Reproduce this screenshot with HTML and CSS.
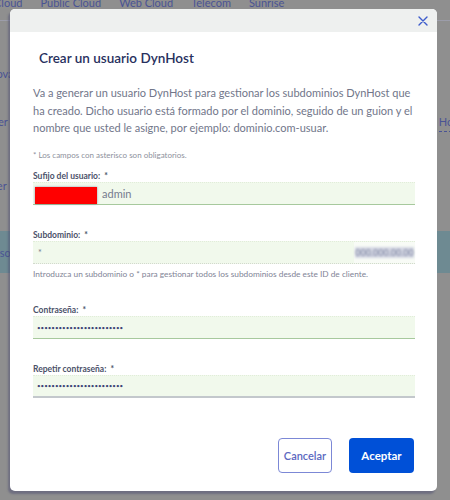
FILE: index.html
```html
<!DOCTYPE html>
<html lang="es">
<head>
    <meta charset="UTF-8">
    <meta name="viewport" content="width=device-width, initial-scale=1.0">
    <title>DynHost</title>
    <link rel="stylesheet" href="styles.css">
</head>
<body>
    <!-- dimmed manager page behind the dialog -->
    <div class="page">
        <nav class="topnav">
            <span class="nav-item first">Cloud</span>
            <span class="nav-item">Public Cloud</span>
            <span class="nav-item">Web Cloud</span>
            <span class="nav-item">Telecom</span>
            <span class="nav-item">Sunrise</span>
        </nav>
        <div class="page-row row-a"><span class="side-l">Renova</span></div>
        <div class="page-row row-b">
            <span class="side-l">Gener</span>
            <span class="side-r">Host</span>
        </div>
        <div class="page-row row-c"><span class="side-l">Hacer</span></div>
        <div class="page-band"><span class="side-l">Uso</span></div>
    </div>

    <div class="modal" role="dialog">
        <div class="modal-head">
            <button class="close" aria-label="Cerrar">
                <svg width="10" height="10" viewBox="0 0 10 10">
                    <path d="M1 1 L9 9 M9 1 L1 9" stroke="#3d5ccc" stroke-width="1.4" stroke-linecap="round" fill="none"/>
                </svg>
            </button>
        </div>

        <div class="modal-body">
            <h2 class="modal-title">Crear un usuario DynHost</h2>
            <p class="intro">Va a generar un usuario DynHost para gestionar los subdominios DynHost que ha creado. Dicho usuario está formado por el dominio, seguido de un guion y el nombre que usted le asigne, por ejemplo: dominio.com-usuar.</p>
            <p class="note">* Los campos con asterisco son obligatorios.</p>

            <div class="field first">
                <label class="field-label">Sufijo del usuario:&nbsp; *</label>
                <div class="input valid">
                    <span class="redact"></span>
                    <span class="value">admin</span>
                </div>
            </div>

            <div class="field">
                <label class="field-label">Subdominio:&nbsp; *</label>
                <div class="input plain">
                    <span class="value star">*</span>
                    <span class="addr"><span class="addr-text">000.000.00.00</span></span>
                </div>
                <p class="help">Introduzca un subdominio o * para gestionar todos los subdominios desde este ID de cliente.</p>
            </div>

            <div class="field">
                <label class="field-label">Contraseña:&nbsp; *</label>
                <div class="input valid">
                    <span class="dots">••••••••••••••••••••••••</span>
                </div>
            </div>

            <div class="field">
                <label class="field-label">Repetir contraseña:&nbsp; *</label>
                <div class="input focused">
                    <span class="dots">••••••••••••••••••••••••</span>
                </div>
            </div>
        </div>

        <div class="modal-foot">
            <button class="btn btn-ghost">Cancelar</button>
            <button class="btn btn-primary">Aceptar</button>
        </div>
    </div>
</body>
</html>
```

FILE: styles.css
```css
* {
    margin: 0;
    padding: 0;
    box-sizing: border-box;
}

body {
    font-family: Lato, "Open Sans", sans-serif;
    background: #8f8f8f;
    height: 100vh;
    overflow: hidden;
}

/* background page */
.page {
    color: #4a5394;
    font-size: 11px;
}

.topnav {
    display: flex;
    gap: 18px;
    height: 25px;
    margin-top: -4px;
    line-height: 14px;
    border-bottom: 1px solid #9c9daa;
}

.nav-item.first {
    margin-left: -6px;
}

.page-row {
    display: flex;
    justify-content: space-between;
    line-height: 12px;
}

.row-a { margin-top: 47px; }
.row-b { margin-top: 36px; }
.row-c { margin-top: 48px; }

.side-l {
    margin-left: -22px;
}

.side-r {
    margin-right: -12px;
    padding-bottom: 3px;
    border-bottom: 1px dashed #4a5394;
}

.page-band {
    margin-top: 39px;
    height: 42px;
    background: #6e8a92;
    display: flex;
    align-items: center;
}

.page-band .side-l {
    margin-left: -8px;
}

/* dialog */
.modal {
    position: absolute;
    top: 9px;
    left: 10px;
    width: 427px;
    background: #fff;
    border-radius: 5px;
    box-shadow: -2px 3px 2px rgba(70, 72, 110, 0.45);
}

.modal-head {
    height: 23px;
    background: #eef0ef;
    border-radius: 5px 5px 0 0;
    display: flex;
    justify-content: flex-end;
    align-items: center;
    padding-right: 9px;
}

.close {
    border: 0;
    background: none;
    display: flex;
    cursor: pointer;
}

.modal-body {
    padding: 0 22px 0 23px;
}

.modal-title {
    margin: 17px 0 0 6px;
    font-size: 13.5px;
    line-height: 18px;
    font-weight: 600;
    color: #27305e;
}

.intro {
    margin-top: 17px;
    font-size: 11px;
    line-height: 17.5px;
    color: #71768a;
}

.note {
    margin-top: 12px;
    font-size: 8px;
    line-height: 12px;
    color: #8d919c;
}

.field {
    margin-top: 24px;
}

.field.first {
    margin-top: 9px;
}

.field-label {
    display: block;
    font-size: 8.5px;
    line-height: 12px;
    font-weight: 700;
    color: #4b5169;
}

.input {
    height: 23px;
    display: flex;
    align-items: center;
    padding-left: 2px;
    background: #f1f9ec;
    border-top: 1px dotted #e1edd9;
    border-bottom: 1px solid #a7c99d;
}

.input.plain {
    border-bottom: 1px dotted #d2d9cd;
}

.input.focused {
    border-bottom: 2px solid #c3c8cc;
}

.redact {
    width: 62px;
    height: 17px;
    margin-top: 4px;
    background: #ff0000;
    box-shadow: 0 0 2px rgba(80, 80, 120, 0.6);
}

.value {
    margin-left: 5px;
    font-size: 11px;
    color: #767b8e;
}

.value.star {
    margin-left: 3px;
    font-size: 9px;
}

/* blurred client address chip */
.addr {
    margin-left: auto;
    width: 61px;
    height: 100%;
    background: #f8fbf6;
    display: flex;
    align-items: center;
    justify-content: center;
}

.addr-text {
    font-size: 9px;
    font-weight: 700;
    color: #8c92ad;
    background: #d6d9e4;
    filter: blur(0.9px);
}

.dots {
    margin-left: 2px;
    font-size: 6.2px;
    color: #3d4576;
}

.help {
    margin-top: 4px;
    font-size: 8.3px;
    line-height: 12px;
    color: #7f8496;
}

.modal-foot {
    display: flex;
    justify-content: flex-end;
    gap: 17px;
    padding: 40px 23px 18px 0;
}

.btn {
    height: 35px;
    border-radius: 4px;
    font-family: inherit;
    font-size: 11px;
    cursor: pointer;
}

.btn-ghost {
    width: 54px;
    background: #fff;
    border: 1px solid #7c88d6;
    color: #5b68bf;
    font-weight: 600;
}

.btn-primary {
    width: 65px;
    background: #0050d7;
    border: 0;
    color: #fff;
    font-weight: 700;
    font-size: 11.5px;
}
```
